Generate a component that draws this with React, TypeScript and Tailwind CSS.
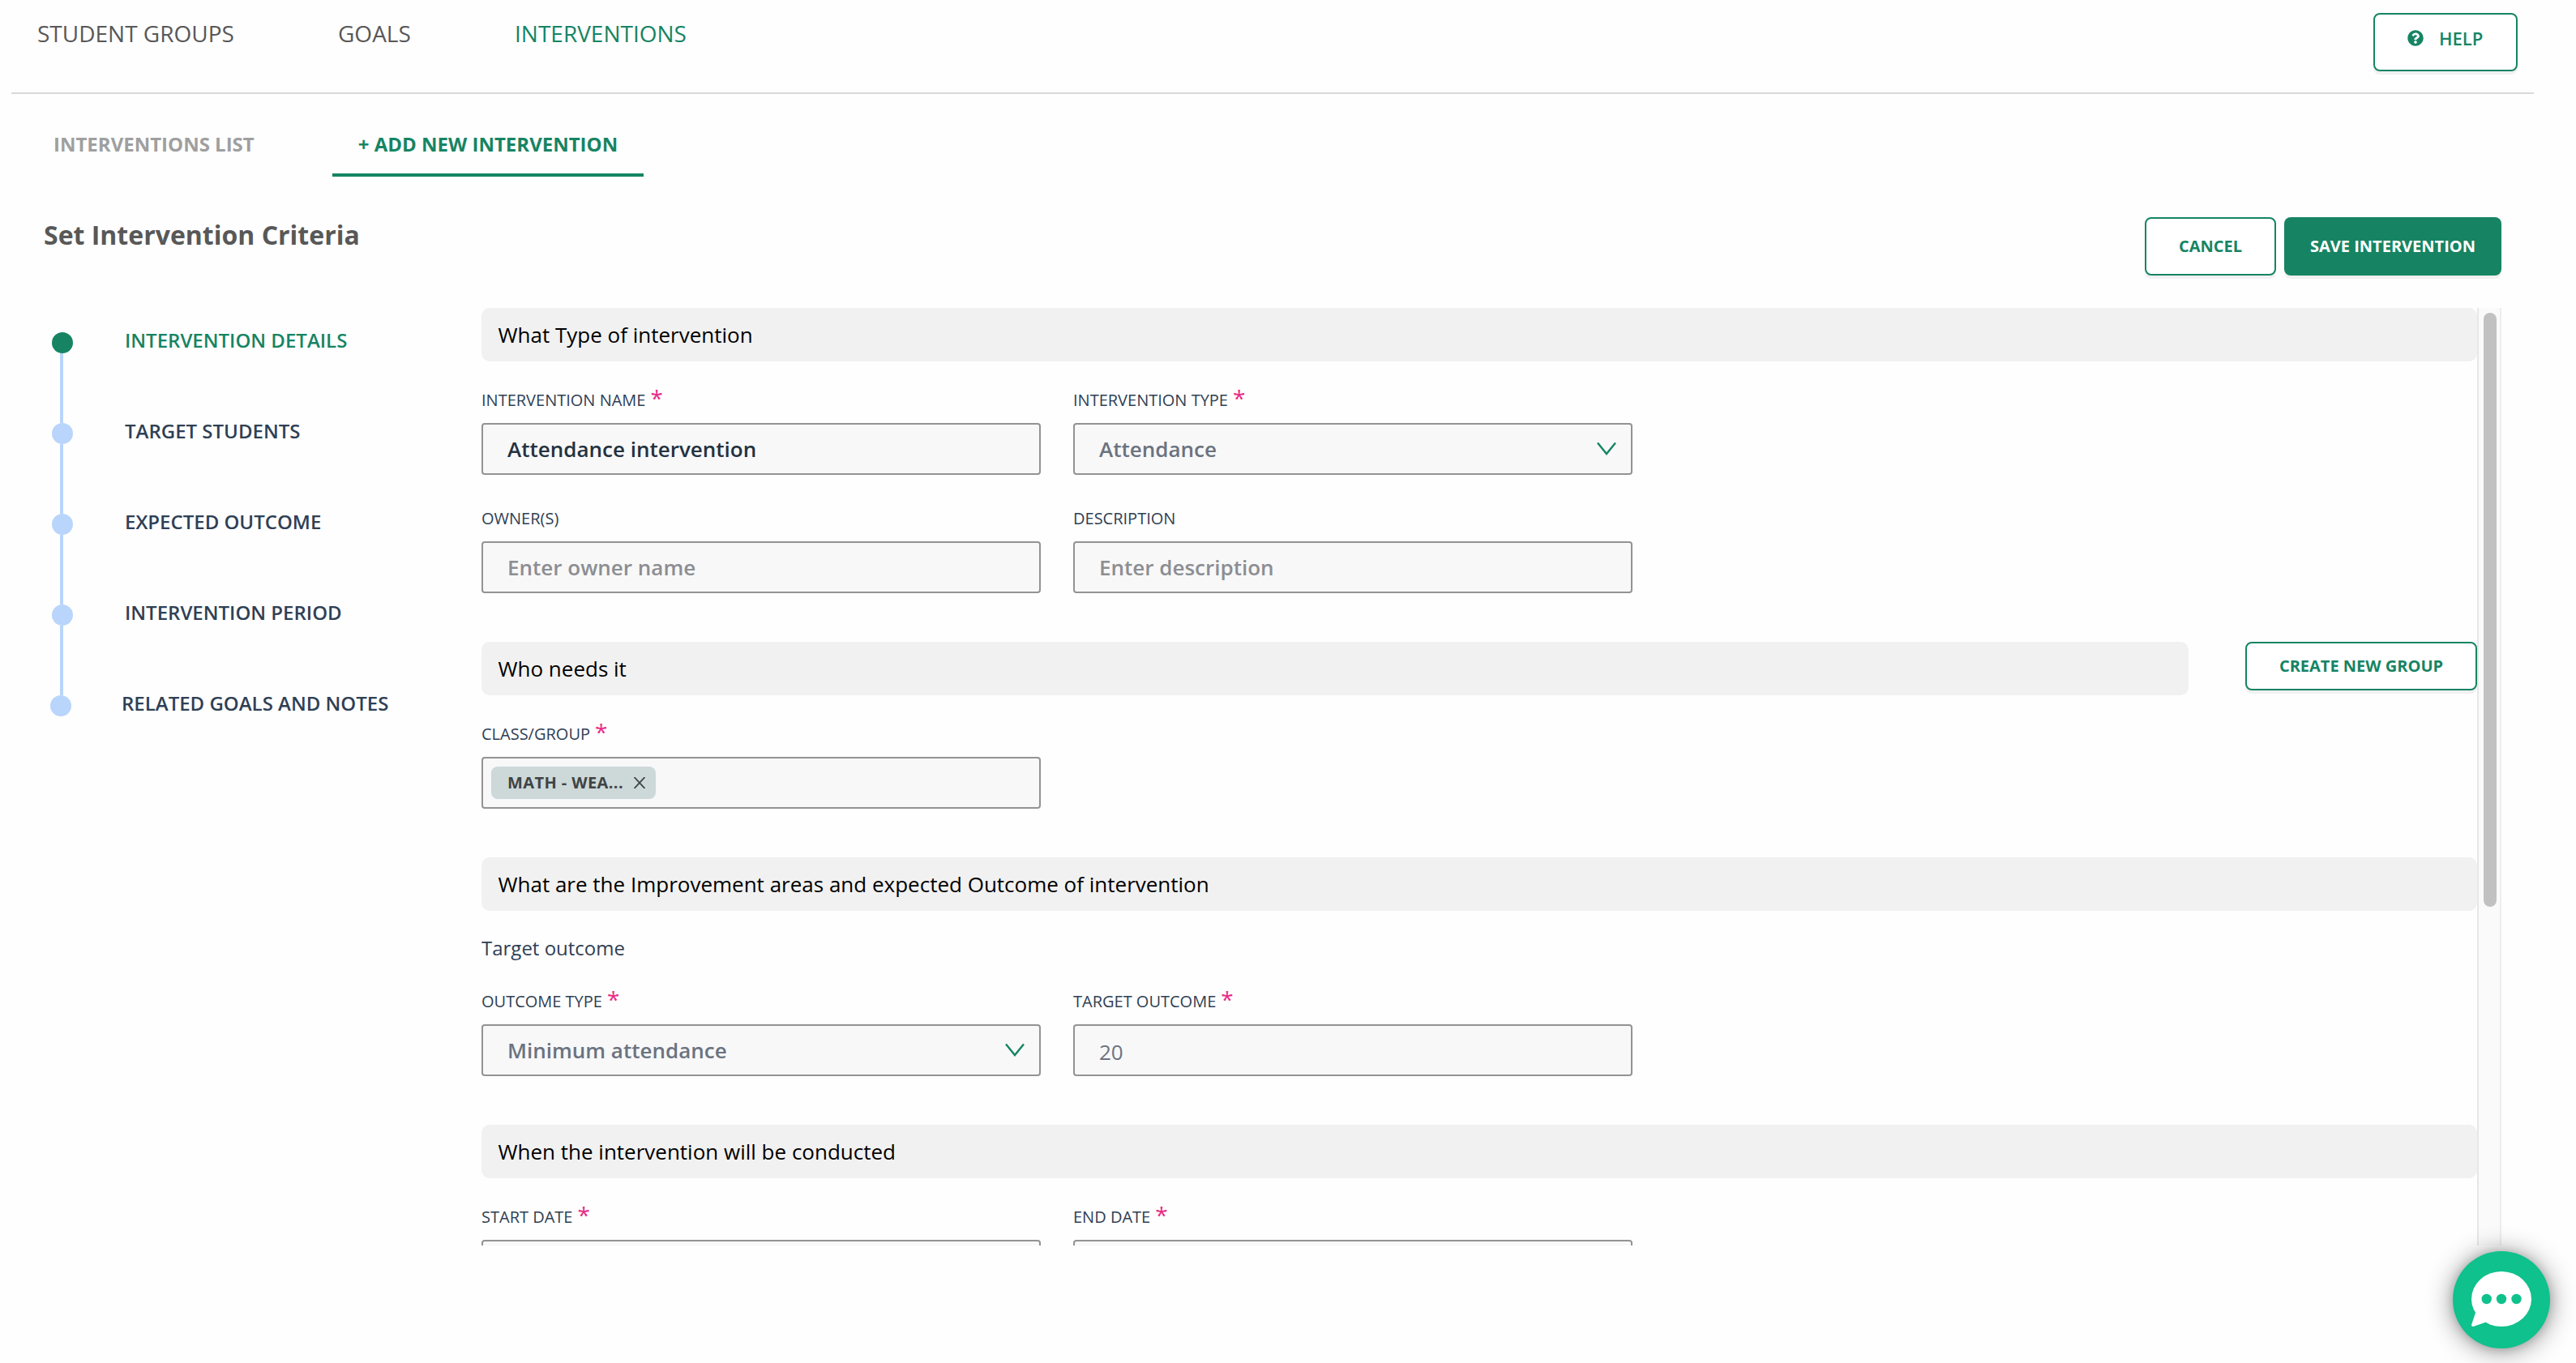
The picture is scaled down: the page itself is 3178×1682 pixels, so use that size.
import React from 'react';

const NAV = ['STUDENT GROUPS', 'GOALS', 'INTERVENTIONS'];

const STEPS = ['INTERVENTION DETAILS', 'TARGET STUDENTS', 'EXPECTED OUTCOME', 'INTERVENTION PERIOD', 'RELATED GOALS AND NOTES'];

function Chevron() {
  return (
    <svg className="w-6 h-4 mr-[18px]" viewBox="0 0 24 16" fill="none" stroke="#168463" strokeWidth="2.4">
      <path d="M1 0.5 L12 14 L23 0.5" />
    </svg>
  );
}

function SectionBar({ title, className = 'w-full' }: { title: string; className?: string }) {
  return (
    <div className={`${className} h-[66px] shrink-0 rounded-[10px] bg-[#f1f1f1] pl-[20.5px] flex items-center`}>
      <h3 className="text-[26px] leading-[36px] text-black">{title}</h3>
    </div>
  );
}

function Field({ label, required, children }: { label: string; required?: boolean; children?: React.ReactNode }) {
  return (
    <div className="w-[690px]">
      <div className="h-14 flex items-center text-[20px] leading-[28px] text-[#2f4054]">
        <span>{label}</span>
        {required && <span className="ml-[6px] -mt-[6px] text-[28px] leading-[28px] text-[#ea2a86]">*</span>}
      </div>
      <div className="h-16 rounded-[4px] border-2 border-[#939393] bg-[#f8f8f8] flex items-center justify-between">{children}</div>
    </div>
  );
}

export default function App() {
  return (
    <div className="relative w-[3178px] h-[1682px] overflow-hidden bg-[#fefefe] font-['Open_Sans',sans-serif]">

      {/* TOP NAV */}
      <header className="ml-[14px] w-[3112px] h-[116px] border-b-2 border-[#d9d9d9] flex justify-between pt-4 pr-5">
        <nav className="flex pl-8 pt-[11px] text-[28px] leading-[28px] text-[#585858]">
          <span className="w-[371px]">{NAV[0]}</span>
          <span className="w-[218px]">{NAV[1]}</span>
          <span className="text-[#168463]">{NAV[2]}</span>
        </nav>
        <button className="w-[178px] h-[72px] rounded-lg border-2 border-[#168463] bg-white shadow-[0_4px_0_rgba(0,0,0,0.05)] flex items-start pl-10 pt-[18px] text-[#168463]">
          <svg className="w-5 h-5 mt-px" viewBox="0 0 512 512" fill="currentColor">
            <path d="M504 256c0 136.997-111.043 248-248 248S8 392.997 8 256C8 119.083 119.043 8 256 8s248 111.083 248 248zM262.655 90c-54.497 0-89.255 22.957-116.549 63.758-3.536 5.286-2.353 12.415 2.715 16.258l34.699 26.31c5.205 3.947 12.621 3.008 16.665-2.122 17.864-22.658 30.113-35.797 57.303-35.797 20.429 0 45.698 13.148 45.698 32.958 0 14.976-12.363 22.667-32.534 33.976C247.128 238.528 216 254.941 216 296v4c0 6.627 5.373 12 12 12h56c6.627 0 12-5.373 12-12v-1.333c0-28.462 83.186-29.647 83.186-106.667 0-58.002-60.165-102-116.531-102zM256 338c-25.365 0-46 20.635-46 46 0 25.364 20.635 46 46 46s46-20.636 46-46c0-25.365-20.635-46-46-46z" />
          </svg>
          <span className="ml-[19px] text-[22px] leading-[22px] font-semibold">HELP</span>
        </button>
      </header>

      {/* TABS */}
      <div className="flex pl-[66px] text-[24px] leading-[24px] font-bold">
        <div className="w-[344px] pt-[50px] text-[#9f9f9f]">INTERVENTIONS LIST</div>
        <div className="w-[384px] h-[102px] pt-[50px] border-b-4 border-[#168463] text-center text-[#168463]">+ ADD NEW INTERVENTION</div>
      </div>

      {/* TITLE ROW */}
      <div className="flex justify-between pl-[54px] pr-[92px] pt-[50px] h-[162px]">
        <h1 className="pt-[6px] text-[32px] leading-[32px] font-bold text-[#585858]">Set Intervention Criteria</h1>
        <div className="flex gap-[10px] text-[20px] font-bold">
          <button className="w-[162px] h-[72px] rounded-lg border-2 border-[#168463] bg-white text-[#168463] shadow-[0_4px_0_rgba(0,0,0,0.05)]">CANCEL</button>
          <button className="w-[268px] h-[72px] rounded-lg bg-[#168463] text-white shadow-[0_4px_0_rgba(0,0,0,0.05)]">SAVE INTERVENTION</button>
        </div>
      </div>

      <div className="flex h-[1157px]">

        {/* STEPPER */}
        <aside className="w-[594px] pt-[30px] pl-[62px]">
          {STEPS.map((step, i) => {
            const last = i === STEPS.length - 1;
            return (
              <div key={step} className={last ? 'flex h-[26px]' : 'flex h-28 pl-[2px]'}>
                <div className="w-[26px] flex flex-col items-center">
                  <div className={i === 0 ? 'w-[26px] h-[26px] shrink-0 rounded-full bg-[#168463]' : 'w-[26px] h-[26px] shrink-0 rounded-full bg-[#b9d5fb]'} />
                  {!last && <div className="w-1 flex-1 mr-[2px] bg-[#b9d5fb]" />}
                </div>
                <span
                  className={`${last ? 'ml-[62px]' : 'ml-16'} ${i === 0 ? 'text-[#168463]' : 'text-[#2f4054]'} -mt-[2px] text-[24px] leading-[24px] font-semibold`}
                >
                  {step}
                </span>
              </div>
            );
          })}
        </aside>

        {/* FORM */}
        <main className="w-[2462px] overflow-hidden">
          <SectionBar title="What Type of intervention" />
          <div className="mt-5 flex gap-10">
            <Field label="INTERVENTION NAME" required>
              <span className="pl-[30px] text-[26px] font-semibold text-[#243240]">Attendance intervention</span>
            </Field>
            <Field label="INTERVENTION TYPE" required>
              <span className="pl-[30px] text-[26px] font-semibold text-[#6b7380]">Attendance</span>
              <Chevron />
            </Field>
          </div>
          <div className="mt-[26px] flex gap-10">
            <Field label="OWNER(S)">
              <span className="pl-[30px] text-[26px] font-semibold text-[#8c8e93]">Enter owner name</span>
            </Field>
            <Field label="DESCRIPTION">
              <span className="pl-[30px] text-[26px] font-semibold text-[#8c8e93]">Enter description</span>
            </Field>
          </div>

          <div className="mt-[60px] flex justify-between">
            <SectionBar title="Who needs it" className="w-[2106px]" />
            <button className="w-[286px] h-[60px] rounded-lg border-2 border-[#168463] bg-white text-[20px] font-bold text-[#168463] shadow-[0_4px_0_rgba(0,0,0,0.05)]">CREATE NEW GROUP</button>
          </div>
          <div className="mt-5">
            <Field label="CLASS/GROUP" required>
              <div className="ml-[10px] w-[203px] h-10 rounded-lg bg-[#cdd8d9] flex items-center pl-5 text-[#3f4444]">
                <span className="w-[156px] text-[20px] leading-[28px] tracking-[0.4px] font-bold">MATH - WEA...</span>
                <svg className="w-[14px] h-[14px]" viewBox="0 0 14 14" stroke="#3f4444" strokeWidth="1.8">
                  <path d="M0.5 0 L13.5 14 M13.5 0 L0.5 14" />
                </svg>
              </div>
            </Field>
          </div>

          <div className="mt-[60px]">
            <SectionBar title="What are the Improvement areas and expected Outcome of intervention" />
          </div>
          <p className="h-[84px] pt-[30px] text-[24px] leading-[32px] text-[#2f4054]">Target outcome</p>
          <div className="flex gap-10">
            <Field label="OUTCOME TYPE" required>
              <span className="pl-[30px] text-[26px] font-semibold text-[#6b7380]">Minimum attendance</span>
              <Chevron />
            </Field>
            <Field label="TARGET OUTCOME" required>
              <span className="pl-[30px] pt-[5px] text-[26px] text-[#6b7380]">20</span>
            </Field>
          </div>

          <div className="mt-[60px]">
            <SectionBar title="When the intervention will be conducted" />
          </div>
          <div className="mt-5 flex gap-10">
            <Field label="START DATE" required />
            <Field label="END DATE" required />
          </div>
        </main>

        {/* SCROLLBAR */}
        <div className="w-[30px] border-x-2 border-l-[#e7e7e7] border-r-[#ededed] bg-[#fafafa] pl-[6px] pt-[6px]">
          <div className="w-4 h-[733px] rounded-full bg-[#c1c1c1]" />
        </div>
      </div>

      {/* CHAT BUTTON */}
      <button className="absolute right-8 bottom-[18px] w-[120px] h-[120px] rounded-full bg-[#0fc18c] shadow-[0_1px_12px_rgba(0,0,0,0.15),0_2px_32px_rgba(0,0,0,0.45)]">
        <svg className="w-[120px] h-[120px]" viewBox="0 0 120 120">
          <ellipse cx="60" cy="59" rx="37" ry="34" fill="white" />
          <path d="M28 76 L23 91 Q23 93.5 26 92.8 L39.7 88 L46 84 L34 70 Z" fill="white" />
          <circle cx="41.7" cy="59" r="6.2" fill="#0fc18c" />
          <circle cx="60" cy="59" r="6.2" fill="#0fc18c" />
          <circle cx="78.5" cy="59" r="6.2" fill="#0fc18c" />
        </svg>
      </button>
    </div>
  );
}
